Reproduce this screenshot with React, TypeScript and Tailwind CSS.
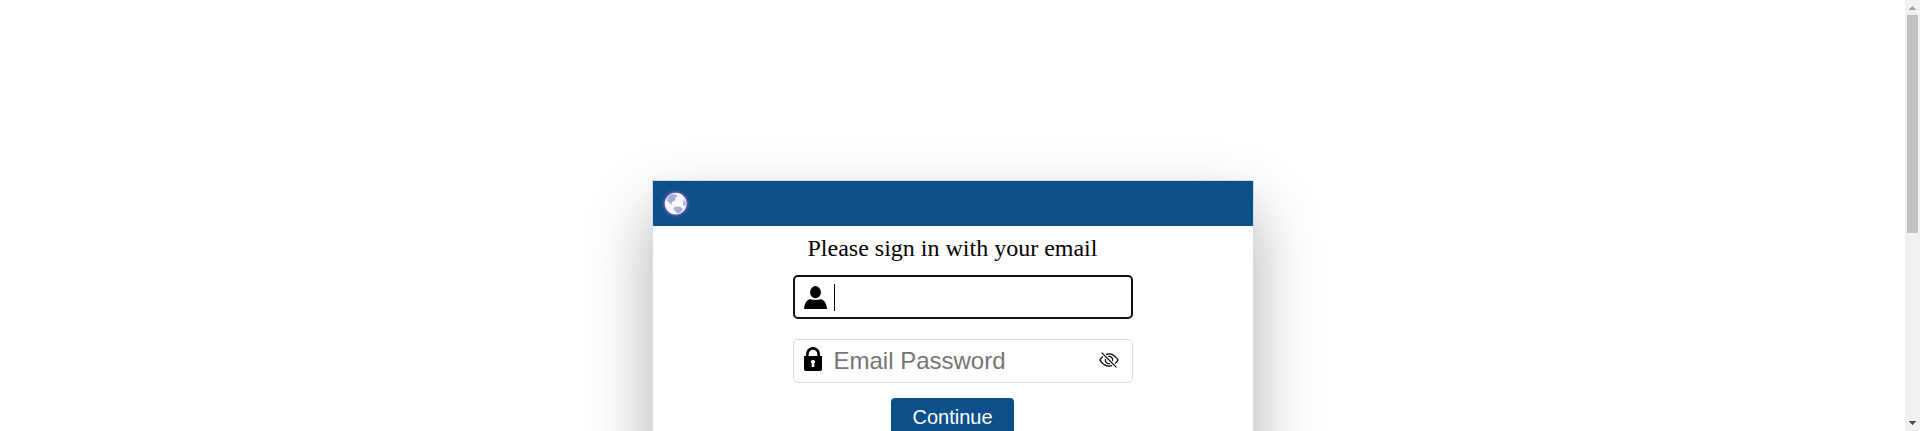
function GlobeIcon() {
  return (
    <svg className="block size-7" viewBox="0 0 28 28">
      <defs>
        <filter id="rim" x="-20%" y="-20%" width="140%" height="140%">
          <feGaussianBlur stdDeviation="0.9" />
        </filter>
        <filter id="soft" x="-20%" y="-20%" width="140%" height="140%">
          <feGaussianBlur stdDeviation="0.6" />
        </filter>
      </defs>
      <circle cx="13.700" cy="13.600" r="12.600" fill="#5f58b4" filter="url(#rim)" />
      <g filter="url(#soft)">
        <circle cx="13.700" cy="13.600" r="10.900" fill="#f8f9ff" />
        <path d="M5.500 7.700 9 4l5.500.5 1 2-2.500 1.500.5 2-3.500 2-.5 3L7 12.500 5 11z" fill="#a5afd4" />
        <path d="M13.500 16.500l5 .5 2.500 2-2 3.200-3.500 1.400-2.200-2-2-3.300z" fill="#a5afd4" />
        <path d="M21.500 8.500l2.300 4-.5 4-2.300-1.500z" fill="#a5afd4" />
      </g>
    </svg>
  );
}

function UserIcon() {
  return (
    <svg className="block h-[23px] w-[23px]" viewBox="0 0 23 23">
      <ellipse cx="11.500" cy="6.200" rx="5.400" ry="6.100" />
      <path d="M6.500 13C8 14.200 15 14.200 16.500 13c3.700.7 6 4.500 6.500 9.200 0 .6-.3.800-.8.800H.8c-.5 0-.8-.2-.8-.8C.5 17.500 2.800 13.700 6.500 13z" />
    </svg>
  );
}

function LockIcon() {
  return (
    <svg className="block h-6 w-[18px]" viewBox="0 0 18 24">
      <path d="M3.300 10V7.200a5.700 5.900 0 0 1 11.400 0V10" fill="none" stroke="#000" strokeWidth="2.700" />
      <path d="M0 9h18v13.200Q18 24 16.200 24H1.800Q0 24 0 22.200z" />
      <path d="M7 14.300Q7 13 9 13t2 1.300V16h-.7v4H7.700v-4H7z" fill="#fff" />
    </svg>
  );
}

function EyeOffIcon() {
  return (
    <svg className="block h-4 w-5" viewBox="0 0 16 13" fill="#000">
      <g transform="translate(0 -1.500)">
        <path d="M13.359 11.238C15.060 9.720 16 8 16 8s-3-5.500-8-5.500a7 7 0 0 0-2.790.588l.770.771A6 6 0 0 1 8 3.500c2.120 0 3.879 1.168 5.168 2.457A13 13 0 0 1 14.828 8q-.086.130-.195.288c-.335.480-.830 1.120-1.465 1.755q-.247.248-.517.486z" />
        <path d="M11.297 9.176a3.500 3.500 0 0 0-4.474-4.474l.823.823a2.500 2.500 0 0 1 2.829 2.829zm-2.943 1.299.822.822a3.500 3.500 0 0 1-4.474-4.474l.823.823a2.500 2.500 0 0 0 2.829 2.829" />
        <path d="M3.350 5.470q-.270.240-.518.487A13 13 0 0 0 1.172 8l.195.288c.335.480.830 1.120 1.465 1.755C4.121 11.332 5.881 12.500 8 12.500c.716 0 1.390-.133 2.020-.360l.770.772A7 7 0 0 1 8 13.500C3 13.500 0 8 0 8s.939-1.721 2.641-3.238l.708.709zm10.296 8.884-12-12 .708-.708 12 12z" />
      </g>
    </svg>
  );
}

function Scrollbar() {
  return (
    <div className="flex h-full w-[15px] shrink-0 flex-col items-center bg-[#f1f1f1]">
      <svg className="block h-[15px] w-[15px] shrink-0" viewBox="0 0 15 15" shapeRendering="crispEdges">
        <path d="M7 6h1v1h1v1h1v1h1v1H4V9h1V8h1V7h1z" fill="#a3a3a3" />
      </svg>
      <div className="h-[218px] w-[11px] bg-[#c1c1c1]" />
      <svg className="mt-auto block h-[15px] w-[15px] shrink-0" viewBox="0 0 15 15" shapeRendering="crispEdges">
        <path d="M4 5h7v1h-1v1H9v1H8v1H7V8H6V7H5V6H4z" fill="#505050" />
      </svg>
    </div>
  );
}

export default function App() {
  return (
    <div className="flex h-[431px] w-full overflow-hidden bg-white text-black">
      <main className="flex flex-1 items-start justify-center overflow-hidden pt-[180px]">
        <section className="h-[440px] w-[602px] border border-[#d2dde8] bg-white shadow-[0_30px_60px_rgba(0,0,0,0.32)]">
          <header className="flex h-[45px] items-center bg-[#0d4f8b] pl-[9px]">
            <GlobeIcon />
          </header>
          <form className="flex flex-col">
            <h1 className="pt-2 pl-[155px] font-['Liberation_Serif',serif] text-[24px] leading-[29px]">
              Please sign in with your email
            </h1>
            <div className="mt-3 ml-[140px] flex h-[44px] w-[340px] items-center rounded-[5px] border-2 border-[#101010] pl-[9px]">
              <UserIcon />
              <span className="ml-[7px] h-[27px] w-px bg-black" />
            </div>
            <div className="mt-5 ml-[140px] flex h-[44px] w-[340px] items-center rounded-[5px] border border-[#d4deea] pr-[13px] pl-[10px]">
              <span className="-mt-1">
                <LockIcon />
              </span>
              <span className="ml-3 font-['Liberation_Sans',sans-serif] text-[24px] leading-7 text-[#757575]">
                Email Password
              </span>
              <span className="-mt-0.5 ml-auto">
                <EyeOffIcon />
              </span>
            </div>
            <button
              type="button"
              className="mt-[15px] ml-[238px] h-[40px] w-[123px] rounded-[4px] bg-[#0d4f8b] pb-0.5 pl-px font-['Liberation_Sans',sans-serif] text-[20px] leading-6 text-white"
            >
              Continue
            </button>
          </form>
        </section>
      </main>
      <Scrollbar />
    </div>
  );
}
